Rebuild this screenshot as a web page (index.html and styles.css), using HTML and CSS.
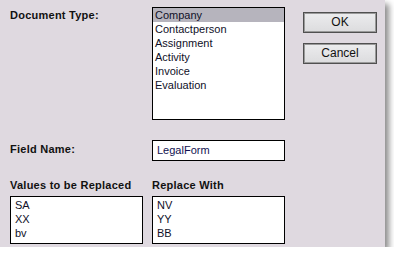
FILE: index.html
```html
<!DOCTYPE html>
<html>
	<head>
		<title>Replace Values</title>
		<meta charset="UTF-8"/>
		<link rel="stylesheet" href="styles.css">
	</head>
	<body>
		<div class="dialog">
			<div class="row top">
				<div class="label">Document Type:</div>
				<div class="list">
					<div class="item selected">Company</div>
					<div class="item">Contactperson</div>
					<div class="item">Assignment</div>
					<div class="item">Activity</div>
					<div class="item">Invoice</div>
					<div class="item">Evaluation</div>
				</div>
				<div class="buttons">
					<div class="button">OK</div>
					<div class="button">Cancel</div>
				</div>
			</div>
			<div class="row field">
				<div class="label">Field Name:</div>
				<div class="input">LegalForm</div>
			</div>
			<div class="row heads">
				<div class="label">Values to be Replaced</div>
				<div class="label">Replace With</div>
			</div>
			<div class="row values">
				<div class="box">
					<div class="item">SA</div>
					<div class="item">XX</div>
					<div class="item">bv</div>
				</div>
				<div class="box">
					<div class="item">NV</div>
					<div class="item">YY</div>
					<div class="item">BB</div>
				</div>
			</div>
		</div>
	</body>
</html>
```
FILE: styles.css
```css
html, body {
	margin: 0;
	background-color: #ffffff;
}

.dialog {
	width: 385px;
	height: 247px;
	box-sizing: border-box;
	padding: 7px 0 0 10px;
	background-color: #dfd9e0;
	box-shadow: 4px 4px 6px rgba(0, 0, 0, 0.45);
	font-family: "Liberation Sans", Arial, sans-serif;
	font-size: 11px;
	line-height: 14px;
	color: #101028;
}

.row {
	display: flex;
	column-gap: 9px;
}

.label {
	width: 133px;
	font-weight: bold;
	letter-spacing: 0.25px;
	color: #111111;
}

.top .label {
	padding-top: 1px;
}

.list, .input, .box {
	width: 133px;
	box-sizing: border-box;
	border: 1px solid #000000;
	background-color: #ffffff;
}

.list {
	height: 113px;
}

.item {
	padding-left: 2px;
	height: 14px;
}

.selected {
	background-color: #b6b4bd;
}

/* buttons column */
.buttons {
	margin-left: 9px;
	padding-top: 5px;
	display: flex;
	flex-direction: column;
	row-gap: 10px;
}

.button {
	width: 74px;
	height: 21px;
	box-sizing: border-box;
	border: 1px solid #505050;
	box-shadow: inset 0 0 0 1px #9a9a9a;
	background: linear-gradient(#ececee, #dcdcde);
	text-align: center;
	font-size: 12px;
	line-height: 19px;
	color: #111111;
}

.field {
	margin-top: 20px;
}

.field .label {
	padding-top: 2px;
}

.input {
	height: 21px;
	padding: 2px 0 0 4px;
	color: #101050;
}

.heads {
	margin-top: 17px;
}

.values {
	margin-top: 4px;
}

.box {
	height: 48px;
	padding-top: 1px;
}

.box .item {
	padding-left: 4px;
}
```
